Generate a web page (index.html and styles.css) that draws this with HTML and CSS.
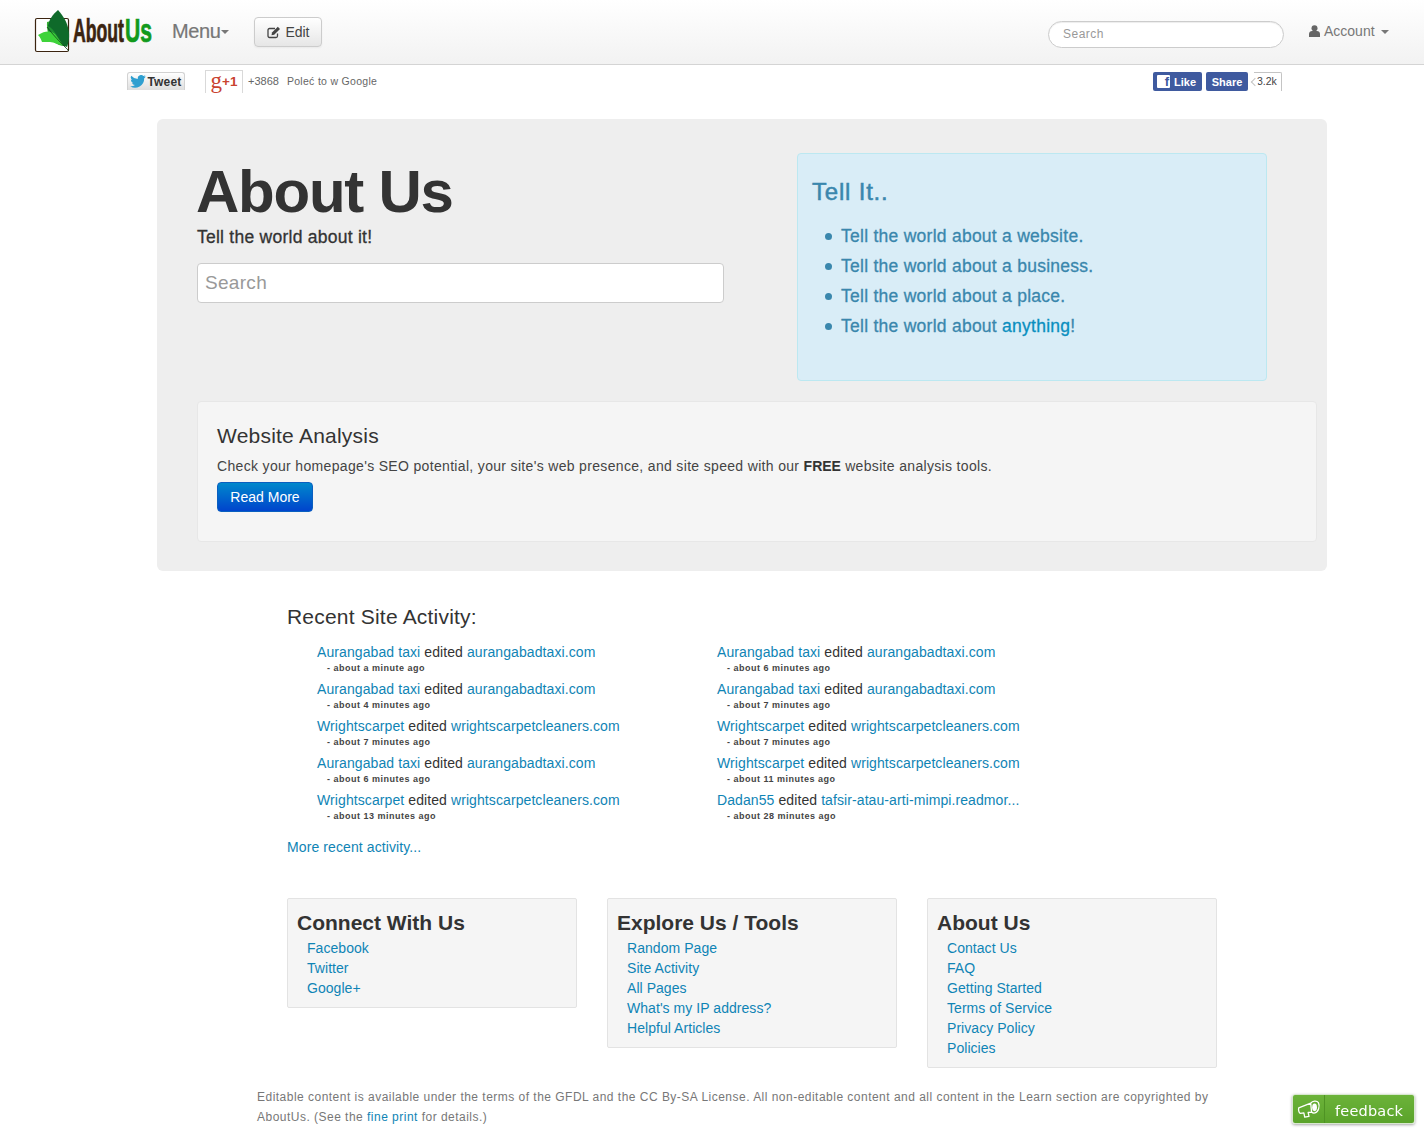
FILE: index.html
```html
<!DOCTYPE html>
<html lang="en">
<head>
<meta charset="utf-8">
<title>About Us</title>
<link rel="stylesheet" href="styles.css">
</head>
<body>
<header class="navbar">
  <div class="nav-left">
    <svg class="logo" width="120" height="46" viewBox="0 0 120 46">
      <rect x="1.500" y="9.500" width="33" height="33" rx="1.500" fill="#fff" stroke="#3b2410" stroke-width="1.200"/>
      <path d="M31 37C22 37 12 30 13 13 16 12 20 12 23 14Z" fill="#35b034"/>
      <path d="M24 1C18 6 15 11 14 17 14 28 24 35 33 38 37 28 36 14 24 1Z" fill="#0f6a2a"/>
      <path d="M14 17C14 26 20 31 28 36 24 28 20 20 14 17Z" fill="#1f8f32"/>
      <path d="M4 26C12 21 17 22 21 25L29 36C24 36 20 33 16 33 13 33 10 33 8 33 7 30 6 28 4 26Z" fill="#3ed33a"/>
      <path d="M13 18C19 26 26 33 35 42" fill="none" stroke="#123d1a" stroke-width=".8"/>
      <text class="logo-about" x="39" y="18.300" textLength="51" lengthAdjust="spacingAndGlyphs" transform="scale(1 1.800)">About</text>
      <text class="logo-us" x="91" y="18.300" textLength="27" lengthAdjust="spacingAndGlyphs" transform="scale(1 1.800)">Us</text>
    </svg>
    <a class="menu-link" href="#">Menu<span class="caret caret-menu"></span></a>
    <a class="edit-btn" href="#">
      <svg class="edit-icon" width="14" height="13" viewBox="0 0 14 13">
        <path d="M10.500 7.500V10a1.500 1.500 0 0 1-1.500 1.500H2.500A1.500 1.500 0 0 1 1 10V4a1.500 1.500 0 0 1 1.500-1.500H8" fill="none" stroke="#444" stroke-width="1.300"/>
        <path d="M5 6.500 10.800 .8 13 3 7.200 8.800 4.500 9.300Z" fill="#444"/>
      </svg>Edit</a>
  </div>
  <div class="nav-right">
    <input class="nav-search" type="text" placeholder="Search">
    <a class="account" href="#">
      <svg width="11" height="12" viewBox="0 0 11 12"><circle cx="5.500" cy="3.200" r="3" fill="#666"/><path d="M0 12V9c0-2 1.500-3 3-3h5c1.500 0 3 1 3 3v3Z" fill="#666"/></svg>
      Account<span class="caret caret-account"></span></a>
  </div>
</header>

<main class="container">
  <div class="social">
    <div class="social-left">
      <a class="tweet" href="#">
        <svg width="16" height="13" viewBox="0 0 24 20"><path d="M24 2.400a10 10 0 0 1-2.800.8A5 5 0 0 0 23.300.500a10 10 0 0 1-3.100 1.200 4.900 4.900 0 0 0-8.400 4.500A14 14 0 0 1 1.700 1a4.900 4.900 0 0 0 1.500 6.600 5 5 0 0 1-2.200-.6 4.900 4.900 0 0 0 3.900 4.900 5 5 0 0 1-2.200.1 4.900 4.900 0 0 0 4.600 3.400A9.900 9.900 0 0 1 0 17.400 14 14 0 0 0 21.500 5a10 10 0 0 0 2.500-2.600Z" fill="#2f9fd0"/></svg>Tweet</a>
      <a class="gplus" href="#"><span class="gplus-g">g</span><span class="gplus-one">+1</span></a>
      <span class="gcount">+3868</span>
      <span class="gtext">Poleć to w Google</span>
    </div>
    <div class="social-right">
      <a class="fb-btn fb-like" href="#"><span class="fb-f">f</span>Like</a>
      <a class="fb-btn fb-share" href="#">Share</a>
      <span class="fb-count">3.2k</span>
    </div>
  </div>

  <section class="hero">
    <div class="hero-top">
      <div class="hero-main">
        <h1>About Us</h1>
        <p class="tagline">Tell the world about it!</p>
        <input class="hero-search" type="text" placeholder="Search">
      </div>
      <aside class="callout">
        <h3>Tell It..</h3>
        <ul>
          <li>Tell the world about a website.</li>
          <li>Tell the world about a business.</li>
          <li>Tell the world about a place.</li>
          <li>Tell the world about <a href="#">anything</a>!</li>
        </ul>
      </aside>
    </div>
    <div class="analysis">
      <h3>Website Analysis</h3>
      <p>Check your homepage's SEO potential, your site's web presence, and site speed with our <b>FREE</b> website analysis tools.</p>
      <a class="read-more" href="#">Read More</a>
    </div>
  </section>

  <section class="recent">
    <h3>Recent Site Activity:</h3>
    <ul class="activity">
      <li><a href="#">Aurangabad taxi</a> edited <a href="#">aurangabadtaxi.com</a><small>- about a minute ago</small></li>
      <li><a href="#">Aurangabad taxi</a> edited <a href="#">aurangabadtaxi.com</a><small>- about 6 minutes ago</small></li>
      <li><a href="#">Aurangabad taxi</a> edited <a href="#">aurangabadtaxi.com</a><small>- about 4 minutes ago</small></li>
      <li><a href="#">Aurangabad taxi</a> edited <a href="#">aurangabadtaxi.com</a><small>- about 7 minutes ago</small></li>
      <li><a href="#">Wrightscarpet</a> edited <a href="#">wrightscarpetcleaners.com</a><small>- about 7 minutes ago</small></li>
      <li><a href="#">Wrightscarpet</a> edited <a href="#">wrightscarpetcleaners.com</a><small>- about 7 minutes ago</small></li>
      <li><a href="#">Aurangabad taxi</a> edited <a href="#">aurangabadtaxi.com</a><small>- about 6 minutes ago</small></li>
      <li><a href="#">Wrightscarpet</a> edited <a href="#">wrightscarpetcleaners.com</a><small>- about 11 minutes ago</small></li>
      <li><a href="#">Wrightscarpet</a> edited <a href="#">wrightscarpetcleaners.com</a><small>- about 13 minutes ago</small></li>
      <li><a href="#">Dadan55</a> edited <a href="#">tafsir-atau-arti-mimpi.readmor...</a><small>- about 28 minutes ago</small></li>
    </ul>
    <a class="more" href="#">More recent activity...</a>
  </section>

  <section class="footer-boxes">
    <div class="fbox">
      <h3>Connect With Us</h3>
      <ul><li><a href="#">Facebook</a></li><li><a href="#">Twitter</a></li><li><a href="#">Google+</a></li></ul>
    </div>
    <div class="fbox">
      <h3>Explore Us / Tools</h3>
      <ul><li><a href="#">Random Page</a></li><li><a href="#">Site Activity</a></li><li><a href="#">All Pages</a></li><li><a href="#">What's my IP address?</a></li><li><a href="#">Helpful Articles</a></li></ul>
    </div>
    <div class="fbox">
      <h3>About Us</h3>
      <ul><li><a href="#">Contact Us</a></li><li><a href="#">FAQ</a></li><li><a href="#">Getting Started</a></li><li><a href="#">Terms of Service</a></li><li><a href="#">Privacy Policy</a></li><li><a href="#">Policies</a></li></ul>
    </div>
  </section>

  <p class="legal"><span class="legal-line">Editable content is available under the terms of the GFDL and the CC By-SA License. All non-editable content and all content in the Learn section are copyrighted by</span> <span class="legal-line">AboutUs. (See the <a href="#">fine print</a> for details.)</span></p>
</main>

<a class="feedback" href="#">
  <span class="fb-icon">
    <svg width="24" height="21" viewBox="0 0 28 24"><path d="M2 10 16 4.500 17 15 13 15.500 14 20 9 21 8 16 4 16.500C2 16 1.500 12 2 10Z M16 4.500C18 2 23 1 25 4 27 8 25 15 21 16 19 16.500 17.500 15.500 17 15" fill="none" stroke="#fff" stroke-width="1.500" stroke-linejoin="round"/><ellipse cx="20.500" cy="9.500" rx="2.800" ry="4.500" fill="#fff"/></svg>
  </span>
  <span class="fb-label">feedback</span>
</a>
</body>
</html>
```
FILE: styles.css
```css
* { box-sizing: border-box; }
html, body { margin: 0; padding: 0; }
body {
  font-family: "Liberation Sans", Arial, sans-serif;
  font-size: 14px;
  line-height: 20px;
  color: #333;
  background: #fff;
  height: 1148px;
  overflow: hidden;
}
a { color: #0f84b5; text-decoration: none; }
ul { list-style: none; margin: 0; padding: 0; }

.navbar {
  height: 65px;
  display: flex;
  justify-content: space-between;
  padding: 0 34px;
  background: linear-gradient(#fff, #f2f2f2);
  border-bottom: 1px solid #d4d4d4;
}
.nav-left { display: flex; align-items: flex-start; }
.logo { margin-top: 9px; flex: none; }
.logo-about { font-family: "Liberation Sans", sans-serif; font-weight: 700; font-size: 18px; fill: #3b2410; stroke: #3b2410; stroke-width: .4px; }
.logo-us { font-family: "Liberation Sans", sans-serif; font-weight: 700; font-size: 18px; fill: #119a1c; stroke: #119a1c; stroke-width: .4px; }
.menu-link {
  margin: 19px 0 0 18px;
  font-size: 20px;
  line-height: 24px;
  letter-spacing: -.4px;
  color: #777;
  display: flex;
  align-items: center;
  -webkit-text-stroke: .2px #777;
}
.caret { display: inline-block; width: 0; height: 0; border-style: solid; border-color: #777 transparent transparent; }
.caret-menu { border-width: 4px 4px 0; margin-left: 1px; margin-top: 2px; }
.edit-btn {
  margin: 17px 0 0 25px;
  width: 68px;
  height: 30px;
  display: flex;
  align-items: center;
  justify-content: center;
  gap: 4px;
  color: #444;
  border: 1px solid #ccc;
  border-radius: 4px;
  background: linear-gradient(#fff, #e6e6e6);
  box-shadow: inset 0 1px 0 rgba(255,255,255,.4), 0 1px 2px rgba(0,0,0,.05);
}
.nav-right { display: flex; align-items: flex-start; }
.nav-search {
  margin-top: 21px;
  width: 236px;
  height: 27px;
  padding: 0 14px 2px;
  border: 1px solid #ccc;
  border-radius: 14px;
  font: 12px "Liberation Sans", Arial, sans-serif;
  letter-spacing: .5px;
  background: #fff;
  box-shadow: inset 0 1px 1px rgba(0,0,0,.075);
}
input::placeholder { color: #999; opacity: 1; }
.account {
  margin: 21px 0 0 25px;
  width: 81px;
  color: #777;
  display: flex;
  align-items: center;
  gap: 4px;
}
.caret-account { border-width: 4px 4px 0; margin-left: 2px; margin-top: 2px; }

.container { width: 1170px; margin: 0 auto; }
.social {
  display: flex;
  justify-content: space-between;
  height: 54px;
  padding: 5px 15px 0 0;
  font-size: 11px;
  line-height: 22px;
  color: #666;
}
.social-left, .social-right { display: flex; align-items: flex-start; }
.tweet {
  margin-top: 2px;
  width: 58px;
  height: 18px;
  display: flex;
  align-items: center;
  justify-content: center;
  gap: 1px;
  font-size: 12px;
  font-weight: 700;
  letter-spacing: .2px;
  color: #333;
  background: linear-gradient(#fff, #dedede);
  border: 1px solid #d2d2d2;
  border-bottom: 0;
  border-radius: 3px 3px 0 0;
}
.gplus {
  margin-left: 20px;
  width: 38px;
  height: 23px;
  display: flex;
  align-items: center;
  justify-content: center;
  border: 1px solid #d9d9d9;
  border-bottom: 0;
  color: #c9432f;
}
.gplus-g { font: 400 23px/20px "Liberation Serif", serif; margin-top: -3px; }
.gplus-one { font: 700 13.500px/20px "Liberation Sans", sans-serif; }
.gcount { margin-left: 5px; }
.gtext { margin-left: 8px; font-size: 10.500px; letter-spacing: .3px; }
.fb-btn {
  margin-top: 2px;
  height: 19px;
  display: flex;
  align-items: center;
  color: #fff;
  font-weight: 700;
  background: #3f5a9f;
  border-radius: 2px;
}
.fb-like { width: 49px; gap: 4px; padding-left: 4px; }
.fb-f {
  width: 13px;
  height: 13px;
  background: #fff;
  color: #3f5a9f;
  border-radius: 1px;
  font: 700 13px/14px "Liberation Sans", sans-serif;
  text-align: right;
  padding-right: 1px;
}
.fb-share { width: 42px; margin-left: 4px; justify-content: center; }
.fb-count {
  position: relative;
  margin: 2px 0 0 6px;
  width: 28px;
  height: 19px;
  padding-left: 3px;
  line-height: 17px;
  font-size: 10.500px;
  color: #444;
  border: 1px solid #c4c4c4;
  border-bottom: 0;
  border-left-width: 0;
  border-radius: 0 2px 0 0;
}
.fb-count::before {
  content: "";
  position: absolute;
  left: -2px;
  top: 6px;
  width: 5px;
  height: 5px;
  background: #fff;
  border-left: 1px solid #c4c4c4;
  border-bottom: 1px solid #c4c4c4;
  transform: rotate(45deg);
}

.hero {
  margin: 0 -30px 0 30px;
  width: 1170px;
  height: 452px;
  padding: 34px 10px 0 40px;
  background: #eee;
  border-radius: 6px;
}
.hero-top { display: flex; justify-content: space-between; height: 248px; }
.hero-main { width: 527px; }
h1 {
  margin: 6px 0 0 -1px;
  font-size: 60px;
  line-height: 65px;
  font-weight: 700;
  letter-spacing: -1.250px;
  color: #333;
}
.tagline {
  margin: 0 0 13px;
  font-size: 17.500px;
  line-height: 26px;
  letter-spacing: .25px;
  color: #333;
  -webkit-text-stroke: .3px #333;
}
.hero-search {
  display: block;
  width: 527px;
  height: 40px;
  padding: 0 7px;
  border: 1px solid #ccc;
  border-radius: 4px;
  font: 19px "Liberation Sans", Arial, sans-serif;
  letter-spacing: .3px;
  background: #fff;
}
.callout {
  width: 470px;
  height: 228px;
  margin-right: 50px;
  padding: 24px 14px 0;
  background: #d9edf7;
  border: 1px solid #bce8f1;
  border-radius: 4px;
  color: #3a87ad;
  font-size: 17.500px;
  -webkit-text-stroke: .3px #3a87ad;
}
.callout h3 { margin: 0 0 15px; font-size: 24px; line-height: 28px; font-weight: 400; letter-spacing: .8px; -webkit-text-stroke: .5px #3a87ad; }
.callout ul { padding-left: 13px; }
.callout li { line-height: 30px; letter-spacing: .26px; }
.callout li::before {
  content: "";
  display: inline-block;
  width: 7px;
  height: 7px;
  margin-right: 9px;
  vertical-align: 2px;
  border-radius: 50%;
  background: #3a87ad;
}
.callout a { color: #0a8fbf; -webkit-text-stroke: .3px #0a8fbf; }
.analysis {
  height: 141px;
  padding: 22px 19px 0;
  background: #f5f5f5;
  border: 1px solid #e7e7e7;
  border-radius: 4px;
}
.analysis h3 { margin: 0; font-size: 21px; line-height: 24px; font-weight: 400; color: #333; letter-spacing: .22px; }
.analysis p { margin: 8px 0 6px; letter-spacing: .33px; color: #444; }
.analysis b { color: #333; letter-spacing: 0; }
.read-more {
  display: block;
  width: 96px;
  height: 30px;
  line-height: 29px;
  text-align: center;
  color: #fff;
  background: linear-gradient(#0088cc, #0044cc);
  border: 1px solid #0a5fc0;
  border-radius: 4px;
}

.recent { margin: 31px 0 0 160px; }
.recent h3 { margin: 0 0 10px; font-size: 21px; line-height: 30px; font-weight: 400; letter-spacing: .2px; }
.activity { display: grid; grid-template-columns: 400px 400px; padding-left: 30px; letter-spacing: .09px; }
.activity li { height: 37px; white-space: nowrap; }
.activity small {
  display: block;
  padding-left: 10px;
  font-size: 9px;
  line-height: 12px;
  margin-top: 0;
  font-weight: 700;
  letter-spacing: .5px;
  color: #444;
}
.more { display: block; margin-top: 10px; letter-spacing: .1px; }

.footer-boxes {
  display: flex;
  align-items: flex-start;
  gap: 30px;
  margin: 41px 0 0 160px;
}
.fbox {
  width: 290px;
  padding: 10px 9px 9px;
  background: #f5f5f5;
  border: 1px solid #e3e3e3;
  border-radius: 2px;
}
.fbox h3 { margin: 0; font-size: 21px; line-height: 28px; font-weight: 700; color: #333; }
.fbox ul { padding-left: 10px; margin-top: 1px; }
.fbox li { line-height: 20px; letter-spacing: .05px; }

.legal {
  margin: 19px 0 0 130px;
  width: 960px;
  font-size: 12px;
  line-height: 20px;
  letter-spacing: .48px;
  color: #777;
}
.legal-line { display: block; }

.feedback {
  position: fixed;
  left: 1292px;
  top: 1094px;
  width: 123px;
  height: 30px;
  display: flex;
  align-items: center;
  background: linear-gradient(#6cb33a, #5aa32a);
  border: 1px solid #d8e8cf;
  border-radius: 3px;
  box-shadow: 0 1px 3px rgba(0,0,0,.35);
}
.fb-icon {
  width: 32px;
  height: 100%;
  display: flex;
  align-items: center;
  justify-content: center;
  border-right: 1px solid #4f9324;
}
.fb-label { margin-left: 10px; padding-top: 3px; color: #fff; font: 14.500px/28px "DejaVu Sans", sans-serif; letter-spacing: .2px; }
```
